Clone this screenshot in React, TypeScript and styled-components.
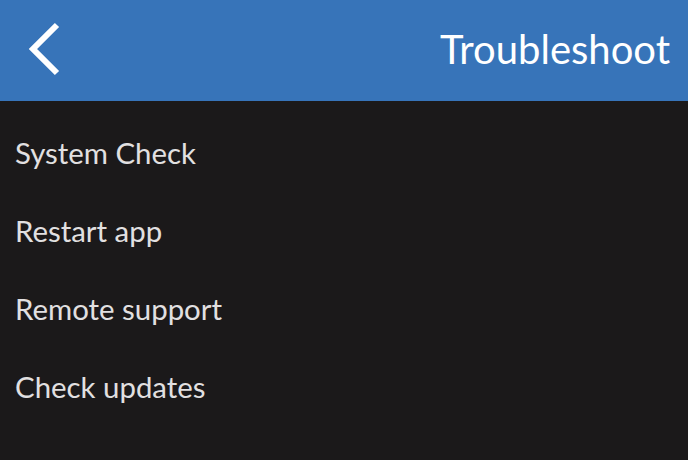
import React from "react";
import styled, { createGlobalStyle } from "styled-components";

const Global = createGlobalStyle`
  html, body { margin: 0; padding: 0; background: #1b191a; }
  body { font-family: Lato, "Open Sans", sans-serif; }
`;

const Page = styled.div`
  width: 688px;
  height: 460px;
  background: #1b191a;
  display: flex;
  flex-direction: column;
  overflow: hidden;
`;

const Header = styled.header`
  height: 101px;
  background: #3774b9;
  display: flex;
  align-items: center;
  justify-content: space-between;
  padding: 0 18px 4px 28px;
  box-sizing: border-box;
  flex-shrink: 0;
`;

const BackButton = styled.button`
  background: none;
  border: none;
  padding: 0;
  width: 36px;
  height: 56px;
  display: flex;
  align-items: center;
  cursor: pointer;
`;

const Title = styled.h1`
  margin: 0;
  font-family: Lato, sans-serif;
  font-weight: 400;
  font-size: 40px;
  color: #ffffff;
  letter-spacing: 0;
`;

const List = styled.ul`
  list-style: none;
  margin: 0;
  padding: 12px 0 0 0;
`;

const Item = styled.li`
  height: 78px;
  display: flex;
  align-items: center;
  padding-left: 15px;
  font-family: Lato, sans-serif;
  font-size: 29.4px;
  color: #e2e0e1;
`;

const items = ["System Check", "Restart app", "Remote support", "Check updates"];

export default function App() {
  return (
    <Page>
      <Global />
      <Header>
        <BackButton aria-label="Back">
          <svg width="36" height="56" viewBox="0 0 36 56">
            <polyline
              points="29,4 5,28 29,52"
              fill="none"
              stroke="#ffffff"
              strokeWidth="6"
              strokeLinecap="butt"
              strokeLinejoin="miter"
            />
          </svg>
        </BackButton>
        <Title>Troubleshoot</Title>
      </Header>
      <List>
        {items.map((t) => (
          <Item key={t}>{t}</Item>
        ))}
      </List>
    </Page>
  );
}
